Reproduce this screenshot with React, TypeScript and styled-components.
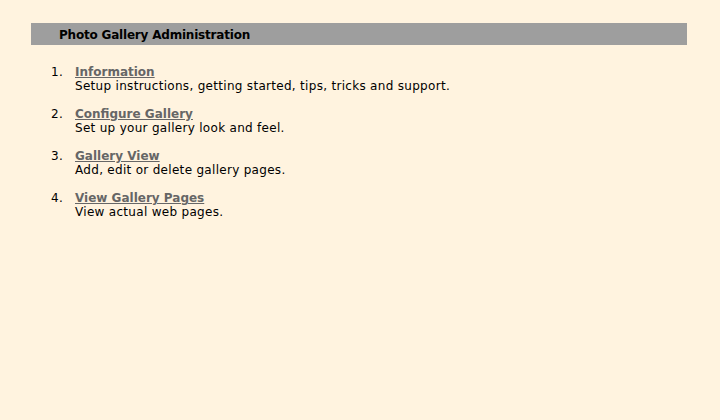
import React from "react";
import styled, { createGlobalStyle } from "styled-components";

const Global = createGlobalStyle`
  html, body { margin: 0; padding: 0; background: #FFF3DF; }
  body { font-family: "DejaVu Sans", Verdana, sans-serif; font-size: 12px; color: #000; }
`;

const Page = styled.div`
  width: 720px;
  height: 420px;
  padding: 23px 33px 0 31px;
  box-sizing: border-box;
  background: #FFF3DF;
`;

const Bar = styled.div`
  height: 22px;
  box-sizing: border-box;
  background: #9E9E9E;
  display: flex;
  align-items: center;
  padding: 1px 0 0 28px;
  font-weight: bold;
  font-size: 12px;
  letter-spacing: -0.2px;
  color: #000;
`;

const List = styled.ol`
  list-style: none;
  margin: 20px 0 0 20px;
  padding: 0;
  display: flex;
  flex-direction: column;
  gap: 14px;
`;

const Item = styled.li`
  display: grid;
  grid-template-columns: 24px 1fr;
  line-height: 14px;
`;

const Num = styled.span`
  letter-spacing: 0.3px;
`;

const Body = styled.div`
  display: flex;
  flex-direction: column;
`;

const Link = styled.a`
  color: #666666;
  font-weight: bold;
  text-decoration: underline;
  align-self: flex-start;
`;

const Desc = styled.span`
  letter-spacing: 0.3px;
`;

const items = [
  ["Information", "Setup instructions, getting started, tips, tricks and support."],
  ["Configure Gallery", "Set up your gallery look and feel."],
  ["Gallery View", "Add, edit or delete gallery pages."],
  ["View Gallery Pages", "View actual web pages."],
];

export default function App() {
  return (
    <Page>
      <Global />
      <Bar>Photo Gallery Administration</Bar>
      <List>
        {items.map(([t, d], i) => (
          <Item key={t}>
            <Num>{i + 1}.</Num>
            <Body>
              <Link href="#">{t}</Link>
              <Desc>{d}</Desc>
            </Body>
          </Item>
        ))}
      </List>
    </Page>
  );
}
